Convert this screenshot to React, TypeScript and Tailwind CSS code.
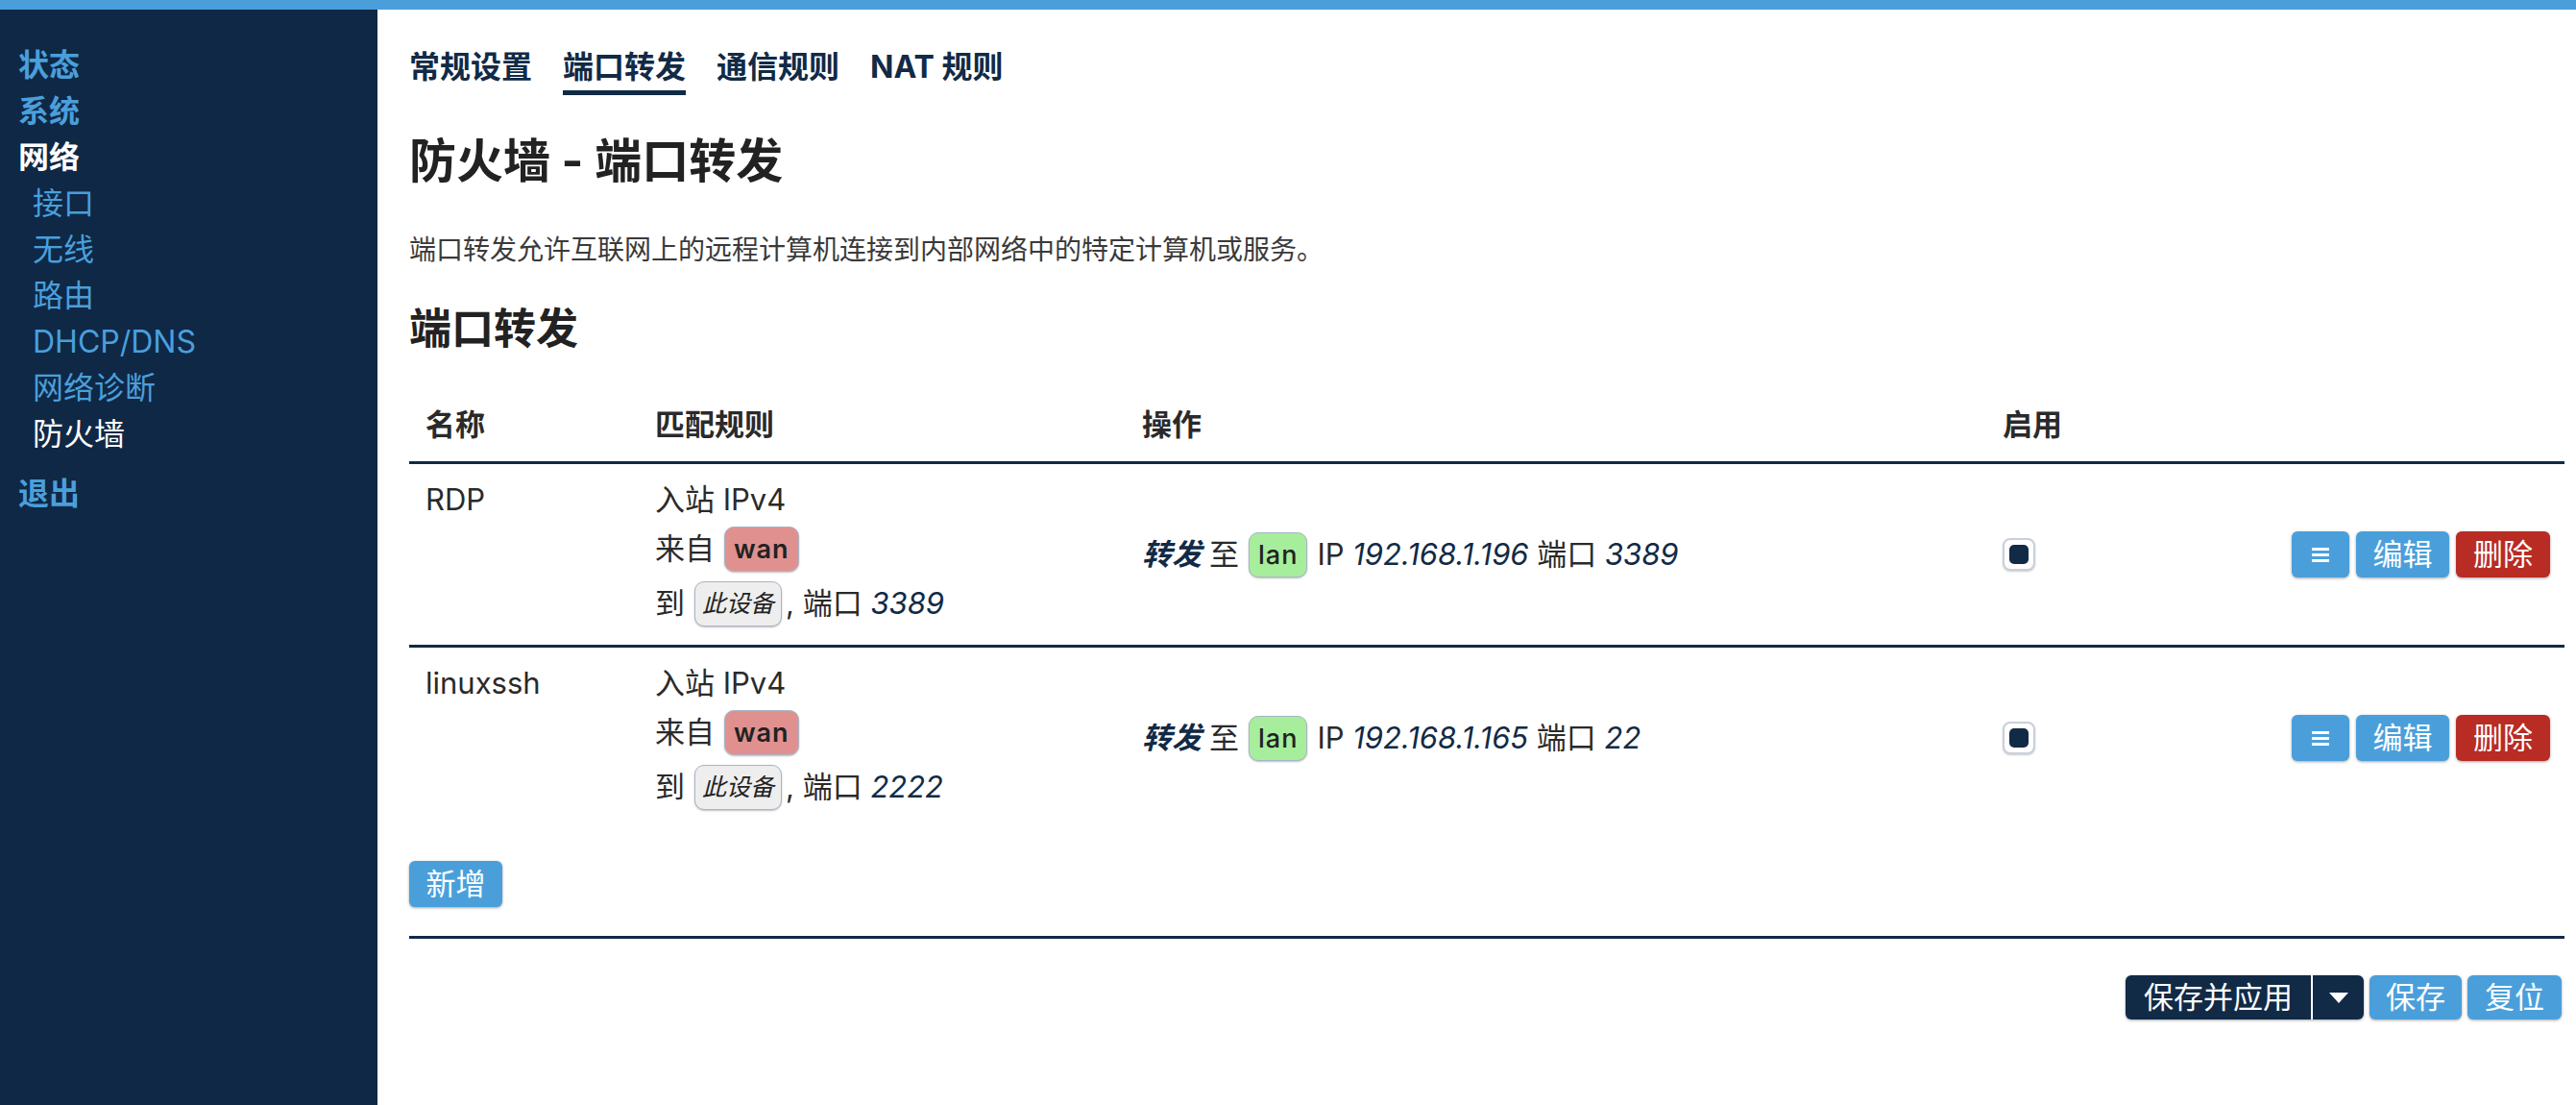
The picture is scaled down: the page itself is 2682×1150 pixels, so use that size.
import React from "react";

const NAVY = "text-[#112a46]";

function Badge({ kind, children }: { kind: "wan" | "lan" | "dev"; children: React.ReactNode }) {
  const base =
    "inline-flex items-center justify-center rounded-[10px] border border-[#a9b4c6] shadow-[0_1px_2px_rgba(0,0,0,0.25)] leading-none";
  if (kind === "wan")
    return (
      <span className={`${base} bg-[#e0918f] h-[47px] px-[9px] text-[27px] font-semibold tracking-[1px] text-[#222]`}>
        {children}
      </span>
    );
  if (kind === "lan")
    return (
      <span className={`${base} bg-[#a6ee9b] h-[47px] px-[9px] text-[27px] font-medium tracking-[1px] text-[#222]`}>
        {children}
      </span>
    );
  return <span className={`${base} bg-[#eeeeee] h-[47px] px-[7px] text-[25px] italic text-[#222]`}>{children}</span>;
}

function Btn({ children, color, w }: { children: React.ReactNode; color: string; w: string }) {
  return (
    <span
      className={`inline-flex items-center justify-center h-[48px] ${w} rounded-[6px] ${color} text-white text-[31px] shadow-[0_1px_3px_rgba(0,0,0,0.35)]`}
    >
      {children}
    </span>
  );
}

function Row({
  name,
  port,
  ip,
  dport,
  border,
}: {
  name: string;
  port: string;
  ip: string;
  dport: string;
  border: boolean;
}) {
  return (
    <div
      className={`grid grid-cols-[239px_507px_896px_300px_1fr] text-[31px] text-[#2a2a2a] ${
        border ? "border-b-[3px] border-[#112a46]" : ""
      }`}
    >
      <div className="pl-[17px] pt-[15px] leading-[44px]">{name}</div>
      <div className="pl-[17px] pt-[15px] pb-[15px]">
        <div className="h-[44px] flex items-center">入站 IPv4</div>
        <div className="h-[58px] flex items-center gap-[10px]">
          <span>来自</span>
          <Badge kind="wan">wan</Badge>
        </div>
        <div className="h-[56px] flex items-center">
          <span className="mr-[10px]">到</span>
          <Badge kind="dev">此设备</Badge>
          <span className="ml-[4px]">, 端口&nbsp;</span>
          <span className={`italic ${NAVY}`}>{port}</span>
        </div>
      </div>
      <div className="pl-[17px] flex items-center">
        <span className={`italic font-bold ${NAVY}`}>转发</span>
        <span className="ml-[8px] mr-[10px]">至</span>
        <Badge kind="lan">lan</Badge>
        <span className="ml-[10px]">IP&nbsp;</span>
        <span className={`italic ${NAVY}`}>{ip}</span>
        <span>&nbsp;端口&nbsp;</span>
        <span className={`italic ${NAVY}`}>{dport}</span>
      </div>
      <div className="pl-[17px] flex items-center">
        <span className="w-[34px] h-[34px] rounded-[8px] border-2 border-[#c9d0da] bg-white flex items-center justify-center shadow-[0_1px_2px_rgba(0,0,0,0.2)]">
          <span className="w-[20px] h-[20px] rounded-[5px] bg-[#112a46]" />
        </span>
      </div>
      <div className="flex items-center justify-end pr-[15px] gap-[7px]">
        <Btn color="bg-[#4a9fdb]" w="w-[60px]">
          <svg width="18" height="16" viewBox="0 0 18 16">
            <rect x="0" y="1" width="18" height="3" fill="white" />
            <rect x="0" y="7" width="18" height="3" fill="white" />
            <rect x="0" y="13" width="18" height="3" fill="white" />
          </svg>
        </Btn>
        <Btn color="bg-[#4a9fdb]" w="w-[97px]">编辑</Btn>
        <Btn color="bg-[#b82c24]" w="w-[98px]">删除</Btn>
      </div>
    </div>
  );
}

export default function App() {
  return (
    <div className="w-[2682px] h-[1150px] flex flex-col bg-white font-['Inter','Noto_Sans_CJK_SC',sans-serif] overflow-hidden">
      <div className="h-[10px] shrink-0 bg-[#4a9fdb]" />
      <div className="flex flex-1">
        <aside className="w-[393px] shrink-0 bg-[#0f2846] pt-[34px] text-[32px] leading-[48px]">
          <div className="pl-[19px] font-bold text-[#4a9fdb]">状态</div>
          <div className="pl-[19px] font-bold text-[#4a9fdb]">系统</div>
          <div className="pl-[19px] font-bold text-white">网络</div>
          <div className="pl-[34px] text-[#4a9fdb]">接口</div>
          <div className="pl-[34px] text-[#4a9fdb]">无线</div>
          <div className="pl-[34px] text-[#4a9fdb]">路由</div>
          <div className="pl-[34px] text-[#4a9fdb]">DHCP/DNS</div>
          <div className="pl-[34px] text-[#4a9fdb]">网络诊断</div>
          <div className="pl-[34px] text-white">防火墙</div>
          <div className="pl-[19px] mt-[14px] font-bold text-[#4a9fdb]">退出</div>
        </aside>
        <main className="flex-1 pl-[33px] pr-[12px]">
          <div className={`flex gap-[32px] pt-[40px] text-[32px] leading-[40px] font-bold ${NAVY}`}>
            <div className="pb-[4px] border-b-[5px] border-transparent">常规设置</div>
            <div className="pb-[4px] border-b-[5px] border-[#112a46]">端口转发</div>
            <div className="pb-[4px] border-b-[5px] border-transparent">通信规则</div>
            <div className="pb-[4px] border-b-[5px] border-transparent">NAT 规则</div>
          </div>
          <h1 className="mt-[41px] text-[49px] leading-[56px] font-bold text-[#222]">防火墙 - 端口转发</h1>
          <p className="mt-[44px] text-[28px] leading-[40px] text-[#3a3a3a]">
            端口转发允许互联网上的远程计算机连接到内部网络中的特定计算机或服务。
          </p>
          <h2 className="mt-[36px] text-[44px] leading-[52px] font-bold text-[#222]">端口转发</h2>
          <div className="mt-[36px]">
            <div className="grid grid-cols-[239px_507px_896px_300px_1fr] h-[79px] items-center border-b-[3px] border-[#112a46] text-[31px] font-bold text-[#2a2a2a]">
              <div className="pl-[17px]">名称</div>
              <div className="pl-[17px]">匹配规则</div>
              <div className="pl-[17px]">操作</div>
              <div className="pl-[17px]">启用</div>
              <div />
            </div>
            <Row name="RDP" port="3389" ip="192.168.1.196" dport="3389" border />
            <Row name="linuxssh" port="2222" ip="192.168.1.165" dport="22" border={false} />
          </div>
          <div className="mt-[34px]">
            <Btn color="bg-[#4a9fdb]" w="w-[97px]">新增</Btn>
          </div>
          <div className="mt-[30px] border-b-[3px] border-[#112a46]" />
          <div className="mt-[38px] flex justify-end gap-[6px] pr-[3px]">
            <span className="inline-flex h-[46px] rounded-[6px] bg-[#112a46] text-white text-[31px] shadow-[0_1px_3px_rgba(0,0,0,0.35)]">
              <span className="w-[193px] flex items-center justify-center">保存并应用</span>
              <span className="w-[2px] bg-white" />
              <span className="w-[53px] flex items-center justify-center">
                <svg width="20" height="11" viewBox="0 0 20 11">
                  <path d="M0 0 L20 0 L10 11 Z" fill="white" />
                </svg>
              </span>
            </span>
            <span className="inline-flex items-center justify-center h-[46px] w-[96px] rounded-[6px] bg-[#4a9fdb] text-white text-[31px] shadow-[0_1px_3px_rgba(0,0,0,0.35)]">
              保存
            </span>
            <span className="inline-flex items-center justify-center h-[46px] w-[98px] rounded-[6px] bg-[#4a9fdb] text-white text-[31px] shadow-[0_1px_3px_rgba(0,0,0,0.35)]">
              复位
            </span>
          </div>
        </main>
      </div>
    </div>
  );
}
